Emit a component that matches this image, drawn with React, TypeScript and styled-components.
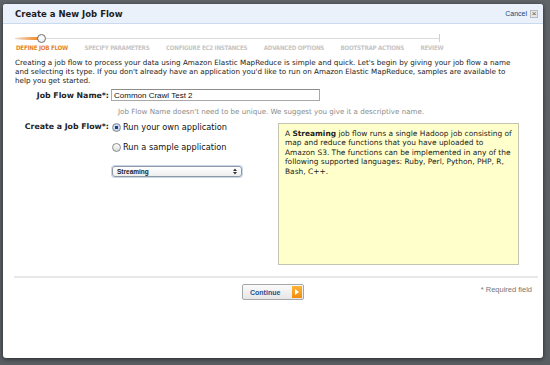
import styled, { createGlobalStyle } from "styled-components";

const GlobalStyle = createGlobalStyle`
  html, body {
    margin: 0;
    padding: 0;
    background: #5c6166;
  }
  * {
    box-sizing: border-box;
  }
`;

const steps = [
  "Define Job Flow",
  "Specify Parameters",
  "Configure EC2 Instances",
  "Advanced Options",
  "Bootstrap Actions",
  "Review",
];

export default function App() {
  return (
    <>
      <GlobalStyle />
      <Page>
        <Dialog>
          <Header>
            <Title>Create a New Job Flow</Title>
            <CancelWrap>
              <CancelLink>Cancel</CancelLink>
              <CloseBox>×</CloseBox>
            </CancelWrap>
          </Header>

          <Steps>
            <Track>
              <TrackDone />
              <TrackKnob />
              <TrackEnd />
            </Track>
            <StepLabels>
              {steps.map((s, i) => (
                <StepLabel key={s} $active={i === 0}>
                  {s}
                </StepLabel>
              ))}
            </StepLabels>
          </Steps>

          <Intro>
            Creating a job flow to process your data using Amazon Elastic MapReduce is simple and quick. Let's begin by giving your job flow a name
            <br />
            and selecting its type. If you don't already have an application you'd like to run on Amazon Elastic MapReduce, samples are available to
            <br />
            help you get started.
          </Intro>

          <NameRow>
            <FieldLabel>Job Flow Name*:</FieldLabel>
            <TextInput defaultValue="Common Crawl Test 2" />
          </NameRow>
          <Hint>
            Job Flow Name doesn't need to be unique. We suggest you give it a descriptive name.
          </Hint>

          <TypeSection>
            <FieldLabel>Create a Job Flow*:</FieldLabel>
            <Options>
              <RadioRow>
                <Radio $checked />
                Run your own application
              </RadioRow>
              <RadioRow>
                <Radio />
                Run a sample application
              </RadioRow>
              <Select>
                <span>Streaming</span>
                <SelectArrows>
                  <svg width="4" height="7" viewBox="0 0 4 7">
                    <path d="M0 3 L2 0.5 L4 3 Z M0 4 L2 6.5 L4 4 Z" fill="#333" />
                  </svg>
                </SelectArrows>
              </Select>
            </Options>
            <InfoBox>
              A <b>Streaming</b> job flow runs a single Hadoop job consisting of map and reduce functions that you have uploaded to Amazon S3. The functions can be implemented in any of the following supported languages: Ruby, Perl, Python, PHP, R, Bash, C++.
            </InfoBox>
          </TypeSection>

          <Separator />

          <Footer>
            <span />
            <ContinueButton>
              <ContinueText>Continue</ContinueText>
              <ContinueArrow>
                <svg width="4" height="6" viewBox="0 0 4 6">
                  <path d="M0 0 L4 3 L0 6 Z" fill="#fff" />
                </svg>
              </ContinueArrow>
            </ContinueButton>
            <Required>* Required field</Required>
          </Footer>
        </Dialog>
      </Page>
    </>
  );
}

const Page = styled.div`
  width: 550px;
  height: 365px;
  padding: 4px 7px 7px 3px;
  background: linear-gradient(180deg, #5f6469 0%, #595e63 100%);
  overflow: hidden;
`;

const Dialog = styled.div`
  width: 540px;
  height: 354px;
  background: #fff;
  border-radius: 3px;
  box-shadow: 0 1px 4px rgba(0, 0, 0, 0.6);
  display: flex;
  flex-direction: column;
  overflow: hidden;
  font-family: "DejaVu Sans", Verdana, sans-serif;
`;

const Header = styled.div`
  height: 20px;
  flex-shrink: 0;
  background: #eaf1fb;
  border-bottom: 1px solid #c9daef;
  display: flex;
  align-items: center;
  justify-content: space-between;
  padding: 0 5px 0 12px;
`;

const Title = styled.div`
  font-size: 8.5px;
  font-weight: bold;
  color: #1d1d1d;
`;

const CancelWrap = styled.div`
  display: flex;
  align-items: center;
  gap: 3px;
`;

const CancelLink = styled.span`
  font-family: "Liberation Sans", Arial, sans-serif;
  font-size: 7px;
  color: #21467e;
`;

const CloseBox = styled.span`
  width: 8px;
  height: 8px;
  border: 1px solid #b9bcc0;
  background: #e4e6e8;
  color: #555;
  font-family: "Liberation Sans", Arial, sans-serif;
  font-size: 8px;
  line-height: 6px;
  text-align: center;
`;

const Steps = styled.div`
  margin-top: 10px;
  padding-left: 12px;
`;

const Track = styled.div`
  position: relative;
  width: 425px;
  height: 9px;
  &::before {
    content: "";
    position: absolute;
    left: 0;
    right: 0;
    top: 4px;
    height: 1px;
    background: #dadada;
  }
`;

const TrackDone = styled.div`
  position: absolute;
  left: 0;
  top: 3px;
  width: 24px;
  height: 3px;
  border-radius: 2px;
  background: linear-gradient(90deg, rgba(240, 150, 60, 0) 0%, #f3a050 70%, #f08a2c 100%);
`;

const TrackKnob = styled.div`
  position: absolute;
  left: 22px;
  top: 0;
  width: 9px;
  height: 9px;
  border-radius: 50%;
  background: radial-gradient(circle at 50% 40%, #ffffff 0%, #f2f2f2 60%, #d6d6d6 100%);
  border: 1px solid #6f6f6f;
`;

const TrackEnd = styled.div`
  position: absolute;
  right: 0;
  top: 0;
  width: 1px;
  height: 8px;
  background: #cfcfcf;
`;

const StepLabels = styled.div`
  display: flex;
  gap: 16.5px;
  margin-top: 1px;
  padding-left: 1px;
`;

const StepLabel = styled.div<{ $active?: boolean }>`
  font-family: "Liberation Sans Narrow", "DejaVu Sans Condensed", "Liberation Sans", sans-serif;
  font-stretch: condensed;
  font-size: 6.2px;
  letter-spacing: -0.25px;
  line-height: 8px;
  font-weight: bold;
  text-transform: uppercase;
  white-space: nowrap;
  color: ${(p) => (p.$active ? "#e5852a" : "#c6c6c6")};
`;

const Intro = styled.p`
  margin: 6px 0 0 12px;
  font-size: 7.2px;
  line-height: 9px;
  color: #222;
  white-space: nowrap;
`;

const NameRow = styled.div`
  display: flex;
  align-items: center;
  margin-top: 4px;
`;

const FieldLabel = styled.div`
  width: 107px;
  flex-shrink: 0;
  text-align: right;
  padding-right: 1px;
  font-size: 7.8px;
  font-weight: bold;
  color: #222;
  white-space: nowrap;
`;

const TextInput = styled.input`
  width: 209px;
  height: 12px;
  margin: 0 0 0 1px;
  padding: 0 2px;
  border: 1px solid #a9a9a9;
  border-top-color: #8c8c8c;
  font-family: "Liberation Sans", Arial, sans-serif;
  font-size: 8px;
  color: #111;
  outline: none;
`;

const Hint = styled.div`
  margin: 6px 0 0 115px;
  font-size: 7.1px;
  line-height: 9px;
  color: #8a8a8a;
  white-space: nowrap;
`;

const TypeSection = styled.div`
  display: flex;
  align-items: flex-start;
  margin-top: 6px;
  ${FieldLabel} {
    line-height: 10px;
  }
`;

const Options = styled.div`
  width: 168px;
  flex-shrink: 0;
  display: flex;
  flex-direction: column;
  align-items: flex-start;
  gap: 10px;
  padding-left: 2px;
`;

const RadioRow = styled.div`
  display: flex;
  align-items: center;
  gap: 2px;
  height: 10px;
  font-size: 8.2px;
  color: #111;
  white-space: nowrap;
`;

const Radio = styled.span<{ $checked?: boolean }>`
  width: 9px;
  height: 9px;
  border-radius: 50%;
  border: 1px solid #8a8a8a;
  background: ${(p) =>
    p.$checked
      ? "radial-gradient(circle, #1f3f74 0 1.4px, #cfe0f4 1.8px, #9dbde3 100%)"
      : "linear-gradient(180deg, #fdfdfd 0%, #dcdcdc 100%)"};
`;

const Select = styled.div`
  margin-top: 4px;
  width: 130px;
  height: 11px;
  border: 1px solid #8f99a6;
  border-radius: 3px;
  background: linear-gradient(180deg, #ffffff 0%, #eeeeee 100%);
  box-shadow: 0 0 0 1px #c8d6e8;
  display: flex;
  align-items: center;
  justify-content: space-between;
  padding: 0 4px 0 4px;
  font-family: "Liberation Sans", Arial, sans-serif;
  font-size: 6.5px;
  font-weight: bold;
  color: #222;
`;

const SelectArrows = styled.span`
  display: flex;
  align-items: center;
`;

const InfoBox = styled.div`
  width: 241px;
  height: 142px;
  margin-top: 1px;
  padding: 5px 4px 5px 6px;
  background: #ffffcc;
  border: 1px solid #c4c4b0;
  font-size: 7.45px;
  line-height: 9.4px;
  color: #222;
`;

const Separator = styled.div`
  margin: 11px 5px 0 11px;
  height: 2px;
  background: #e8e8e8;
`;

const Footer = styled.div`
  display: grid;
  grid-template-columns: 1fr auto 1fr;
  align-items: start;
  margin: 6px 11px 0 11px;
`;

const ContinueButton = styled.div`
  width: 62px;
  height: 16px;
  border: 1px solid #a7a7a7;
  border-radius: 2px;
  background: linear-gradient(180deg, #fbfbfb 0%, #e6e6e6 100%);
  display: flex;
  align-items: center;
  justify-content: space-between;
  padding: 1px 1px 1px 7px;
`;

const ContinueText = styled.span`
  font-family: "Liberation Sans", Arial, sans-serif;
  font-size: 7px;
  font-weight: bold;
  color: #23518f;
`;

const ContinueArrow = styled.span`
  width: 10px;
  height: 12px;
  background: linear-gradient(180deg, #ffb23a 0%, #f18d0c 100%);
  display: flex;
  align-items: center;
  justify-content: center;
`;

const Required = styled.div`
  justify-self: end;
  margin-top: 1px;
  font-family: "Liberation Sans", Arial, sans-serif;
  font-size: 7.5px;
  color: #777;
`;
